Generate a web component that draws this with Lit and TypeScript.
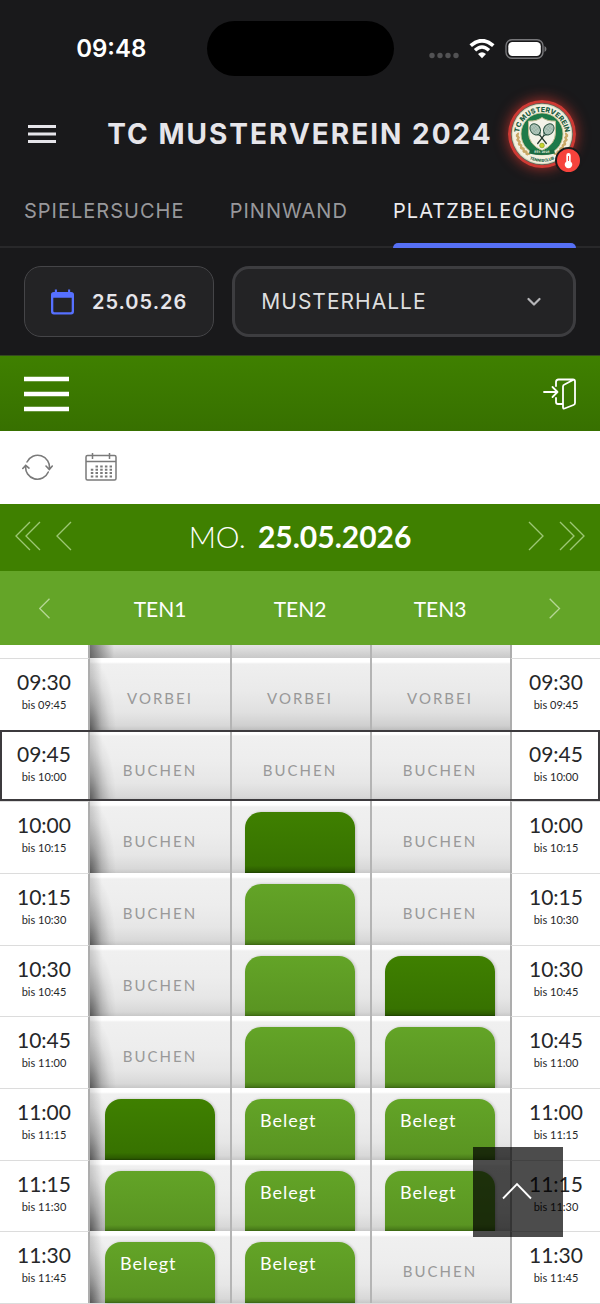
import { LitElement, html, css, svg, nothing } from "lit";
import { customElement, property, state } from "lit/decorators.js";
import { classMap } from "lit/directives/class-map.js";

type Slot = "past" | "free" | "start" | "taken" | "label";

interface Row {
    from: string;
    to: string;
    slots: Slot[];
    current?: boolean;
}

const COURTS = ["TEN1", "TEN2", "TEN3"];

const ROWS: Row[] = [
    { from: "09:30", to: "09:45", slots: ["past", "past", "past"] },
    { from: "09:45", to: "10:00", slots: ["free", "free", "free"], current: true },
    { from: "10:00", to: "10:15", slots: ["free", "start", "free"] },
    { from: "10:15", to: "10:30", slots: ["free", "taken", "free"] },
    { from: "10:30", to: "10:45", slots: ["free", "taken", "start"] },
    { from: "10:45", to: "11:00", slots: ["free", "taken", "taken"] },
    { from: "11:00", to: "11:15", slots: ["start", "label", "label"] },
    { from: "11:15", to: "11:30", slots: ["taken", "label", "label"] },
    { from: "11:30", to: "11:45", slots: ["label", "label", "free"] },
];

const TABS = ["SPIELERSUCHE", "PINNWAND", "PLATZBELEGUNG"];

// ========== Club logo ============= //
@customElement("club-logo")
export class ClubLogo extends LitElement {
    // one side of the laurel, mirrored for the other
    leaves() {
        const angles = [176, 166, 156, 146, 136, 127];
        return angles.map((a) => {
            const r = (a * Math.PI) / 180;
            const x = 34 + 25 * Math.cos(r);
            const y = 34 + 25 * Math.sin(r);
            return svg`
                <ellipse cx=${x - 1} cy=${y} rx="2.6" ry="1.2" transform="rotate(${a - 60} ${x} ${y})"></ellipse>
                <ellipse cx=${x + 1} cy=${y} rx="2.6" ry="1.2" transform="rotate(${a - 130} ${x} ${y})"></ellipse>
            `;
        });
    }

    racket(angle: number) {
        return svg`
            <g transform="rotate(${angle} 34 38)">
                <ellipse cx="34" cy="27" rx="4.8" ry="6" fill="#b4c8bd" stroke="#2c5443" stroke-width="1"></ellipse>
                <path d="M32 22v10M34 21v12M36 22v10M30 25h8M30 28h8" stroke="#7fa392" stroke-width=".4"></path>
                <path d="M32 32l2 3 2-3" fill="none" stroke="#2c5443" stroke-width=".8"></path>
                <path d="M34 35v10" stroke="#24382f" stroke-width="1.3" stroke-linecap="round"></path>
            </g>
        `;
    }

    render() {
        return html`
            <svg viewBox="0 0 68 68" role="img" aria-label="TC Musterverein Tennisclub">
                <defs>
                    <path id="upper" d="M11.200 38A23 23 0 1 1 56.800 38"></path>
                    <path id="lower" d="M13 52.300A27.800 27.800 0 0 0 55 52.300"></path>
                    <path id="banner" d="M25 52.500Q34 53.500 43 52.500"></path>
                </defs>
                <circle cx="34" cy="34" r="34" fill="#cf3a34"></circle>
                <circle cx="34" cy="34" r="31" fill="#54675a"></circle>
                <circle cx="34" cy="34" r="30.300" fill="#d9d8be"></circle>
                <circle cx="34" cy="34" r="29.200" fill="#f3f0e0"></circle>
                <circle cx="34" cy="34" r="21" fill="#1d7a49" stroke="#cfc391" stroke-width=".8"></circle>
                <g fill="#c9a766">${this.leaves()}</g>
                <g fill="#c9a766" transform="translate(68 0) scale(-1 1)">${this.leaves()}</g>
                <path d="M34 17.500q5.500 4 13.500 3.500v11.500q0 12-13.500 18q-13.500-6-13.500-18v-11.500q8 .5 13.500-3.500z"
                    fill="#f4f3e8" stroke="#bdb98e" stroke-width="1"></path>
                ${this.racket(-38)} ${this.racket(38)}
                <circle cx="34" cy="45.500" r="2.400" fill="#c6d52b" stroke="#6f8124" stroke-width=".5"></circle>
                <path d="M22 49.500q12 2 24 0l1 4q-13 3-26 0z" fill="#1b6a42"></path>
                <text class="name"><textPath href="#upper" startOffset="50%">TC MUSTERVEREIN</textPath></text>
                <text class="small"><textPath href="#lower" startOffset="50%">TENNISCLUB</textPath></text>
                <text class="est"><textPath href="#banner" startOffset="50%">EST. 2024</textPath></text>
            </svg>
            <span class="badge">
                <svg viewBox="0 0 23 23" aria-hidden="true">
                    <path d="M9.300 6.200a2.200 2.200 0 0 1 4.400 0v6.200a3.800 3.800 0 1 1-4.400 0z" fill="#fff"></path>
                    <path d="M11.500 7v5" stroke="#f6433c" stroke-width="1"></path>
                </svg>
            </span>
        `;
    }

    static styles = css`
        :host {
            display: block;
            position: relative;
            width: 68px;
            height: 68px;
            border-radius: 50%;
            box-shadow: 0 0 14px rgba(240, 60, 50, 0.7);
        }

        svg {
            display: block;
            width: 100%;
            height: 100%;
        }

        text {
            font-family: Inter, "Liberation Sans", sans-serif;
            font-weight: 800;
            text-anchor: middle;
            fill: #1c5c40;
        }

        .name {
            font-size: 7px;
        }

        .small {
            font-size: 4px;
        }

        .est {
            font-size: 3px;
            fill: #dfe8d2;
        }

        .badge {
            position: absolute;
            right: -6px;
            bottom: -6px;
            width: 23px;
            height: 23px;
            border: 2px solid #19191b;
            border-radius: 50%;
            background: #f6433c;
        }
    `;
}

// ========== Phone status bar ============= //
@customElement("status-bar")
export class StatusBar extends LitElement {
    render() {
        return html`
            <span class="clock">09:48</span>
            <span class="island"></span>
            <span class="signals">
                <svg width="30" height="20" viewBox="0 0 30 20" fill="#525254" aria-hidden="true">
                    <circle cx="3" cy="16.500" r="2.700"></circle>
                    <circle cx="11" cy="16.500" r="2.700"></circle>
                    <circle cx="19" cy="16.500" r="2.700"></circle>
                    <circle cx="27" cy="16.500" r="2.700"></circle>
                </svg>
                <svg width="26" height="20" viewBox="0 0 26 20" aria-hidden="true">
                    <path d="M1.700 6.700Q13-3.300 24.300 6.700" fill="none" stroke="#fff" stroke-width="3.700"></path>
                    <path d="M6 11.300Q13 4.800 20 11.300" fill="none" stroke="#fff" stroke-width="3.400"></path>
                    <path d="M13 19.300l-4-4.300q4-3.400 8 0z" fill="#fff"></path>
                </svg>
                <svg width="42" height="20" viewBox="0 0 42 20" aria-hidden="true">
                    <rect x="1" y=".7" width="37" height="18.600" rx="6" fill="none" stroke="#77777a" stroke-width="1.400"></rect>
                    <rect x="3.300" y="3" width="32.500" height="14" rx="4.200" fill="#fff"></rect>
                    <path d="M39.500 7q2 .8 2 3t-2 3z" fill="#77777a"></path>
                </svg>
            </span>
        `;
    }

    static styles = css`
        :host {
            display: grid;
            grid-template-columns: 1fr auto 1fr;
            align-items: center;
            height: 97px;
            color: #fff;
            font: 600 24px/32px Inter, "Liberation Sans", sans-serif;
        }

        .clock {
            justify-self: center;
            padding-left: 16px;
        }

        .island {
            width: 187px;
            height: 55px;
            border-radius: 28px;
            background: #000;
        }

        .signals {
            display: flex;
            align-items: center;
            justify-content: flex-end;
            gap: 10px;
            padding-right: 53px;
        }
    `;
}

// ========== One bookable cell ============= //
@customElement("court-slot")
export class CourtSlot extends LitElement {
    @property() kind: Slot = "free";

    render() {
        if (this.kind === "past") {
            return html`<span class="text">VORBEI</span>`;
        }
        if (this.kind === "free") {
            return html`<button class="text">BUCHEN</button>`;
        }
        const label = this.kind === "label" ? "Belegt" : nothing;
        return html`<div class="booking ${this.kind}">${label}</div>`;
    }

    static styles = css`
        :host {
            display: grid;
            font-family: Lato, "Liberation Sans", sans-serif;
        }

        .text {
            display: grid;
            place-items: center;
            padding: 8px 0 0;
            border: 0;
            background: none;
            color: #999;
            font: 400 15px/20px Lato, "Liberation Sans", sans-serif;
            letter-spacing: 2px;
            cursor: pointer;
        }

        span.text {
            cursor: default;
        }

        .booking {
            margin: 11px 15px 0;
            padding: 8px 15px 0;
            border-radius: 16px 16px 0 0;
            background: linear-gradient(#63a427, #5a9522 90%, #4a7d1a 97%, #3a6411);
            box-shadow: 1px 0 3px rgba(0, 0, 0, 0.2);
            color: #fff;
            font-size: 18px;
            line-height: 26px;
            letter-spacing: 1px;
        }

        .start {
            background: linear-gradient(#3f8000, #377200 88%, #2c5b00 97%, #1d4000);
        }
    `;
}

// ========== Page ============= //
@customElement("app-root")
export class AppRoot extends LitElement {
    @state() tab = "PLATZBELEGUNG";

    // ------ Thin arrow, single or double -----//
    arrow(dir: "left" | "right", size: number, double = false) {
        const one = dir === "left" ? "M15 1L1 15l14 14" : "M1 1l14 14L1 29";
        return html`
            <svg
                width=${double ? (size * 26) / 30 : (size * 16) / 30}
                height=${size}
                viewBox="0 0 ${double ? 26 : 16} 30"
                fill="none"
                stroke="currentColor"
                stroke-width=${40 / size}
                aria-hidden="true"
            >
                <path d=${one}></path>
                ${double ? svg`<path d=${one} transform="translate(10 0)"></path>` : nothing}
            </svg>
        `;
    }

    time(row: Row) {
        return html`<span class="from">${row.from}</span><span class="to">bis ${row.to}</span>`;
    }

    renderHeader() {
        return html`
            <header class="app-header">
                <status-bar></status-bar>
                <div class="title-bar">
                    <button class="menu" aria-label="Menü">
                        <svg width="28" height="20" viewBox="0 0 28 20" stroke="#e6e5ea" stroke-width="3" aria-hidden="true">
                            <path d="M0 2.500h28M0 10h28M0 17.500h28"></path>
                        </svg>
                    </button>
                    <h1>TC MUSTERVEREIN 2024</h1>
                    <club-logo></club-logo>
                </div>
                <nav class="tabs">
                    ${TABS.map(
                        (name) => html`
                            <button
                                class=${classMap({ tab: true, active: this.tab === name })}
                                @click=${() => (this.tab = name)}
                            >
                                <span>${name}</span>
                            </button>
                        `
                    )}
                </nav>
                <div class="filters">
                    <button class="date">
                        <svg width="23" height="26" viewBox="0 0 24 26" aria-hidden="true">
                            <path
                                d="M4 0h2.200v2.500h11.600V0H20v2.500h1a3 3 0 0 1 3 3V23a3 3 0 0 1-3 3H3a3 3 0 0 1-3-3V5.500a3 3 0 0 1 3-3h1zM2.400 8.500V22.500a1.300 1.300 0 0 0 1.300 1.300h16.600a1.300 1.300 0 0 0 1.300-1.300V8.500z"
                                fill="#5670ff"
                                fill-rule="evenodd"
                            ></path>
                        </svg>
                        25.05.26
                    </button>
                    <div class="place">
                        <select aria-label="Anlage">
                            <option>MUSTERHALLE</option>
                        </select>
                        <svg width="14" height="10" viewBox="0 0 14 10" aria-hidden="true">
                            <path d="M1.500 2L7 7.500 12.500 2" fill="none" stroke="#b5b5b8" stroke-width="2.200" stroke-linecap="round" stroke-linejoin="round"></path>
                        </svg>
                    </div>
                </div>
            </header>
        `;
    }

    renderBars() {
        return html`
            <div class="green-bar">
                <button aria-label="Navigation">
                    <svg width="45" height="36" viewBox="0 0 45 36" stroke="#fff" stroke-width="4.600" aria-hidden="true">
                        <path d="M0 3h45M0 18h45M0 33h45"></path>
                    </svg>
                </button>
                <button aria-label="Anmelden">
                    <svg width="33" height="32" viewBox="0 0 33 32" fill="none" stroke="#fff" stroke-width="1.800" stroke-linejoin="round" stroke-linecap="round" aria-hidden="true">
                        <path d="M13 8V4q0-2.500 2.500-2.500H30q2 0 2 2V25q0 1.500-1.500 2l-9 3.500q-1.500.5-1.500-1.200V8.500q0-1.500 1.500-2L30.500 1.800M13 20v4q0 2 2 2h4.500M1 14h13.500M9.500 9l5 5-5 5"></path>
                    </svg>
                </button>
            </div>
            <div class="tools">
                <button aria-label="Aktualisieren">
                    <svg width="31" height="28" viewBox="0 0 31 28" fill="none" stroke="#7a7a7a" stroke-width="1.600" stroke-linecap="round" aria-hidden="true">
                        <path d="M5 9A11.800 11.800 0 0 1 27.300 16M24 13l3.300 3.500L30.300 13M26.300 19A11.800 11.800 0 0 1 3.700 13M.8 15.500L3.700 12.300l3.300 2.800"></path>
                    </svg>
                </button>
                <button aria-label="Kalender">
                    <svg width="32" height="28" viewBox="0 0 32 28" fill="none" stroke="#7a7a7a" stroke-width="1.500" aria-hidden="true">
                        <rect x="1" y="2.500" width="30" height="24.500" rx="1.500"></rect>
                        <path d="M1 8.500h30M7.500 0v6M24.500 0v6"></path>
                        <path d="M10.500 13.500h16.500M5.800 16.800h21.200M5.800 20.100h21.200M5.800 23.400h21.200" stroke-width="2" stroke-dasharray="2.500 2.200"></path>
                    </svg>
                </button>
            </div>
            <div class="day-bar">
                <div class="arrows">
                    <button aria-label="Woche zurück">${this.arrow("left", 30, true)}</button>
                    <button aria-label="Tag zurück">${this.arrow("left", 30)}</button>
                </div>
                <h2>MO. <b>25.05.2026</b></h2>
                <div class="arrows">
                    <button aria-label="Tag vor">${this.arrow("right", 30)}</button>
                    <button aria-label="Woche vor">${this.arrow("right", 30, true)}</button>
                </div>
            </div>
        `;
    }

    renderPlan() {
        return html`
            <table>
                <thead>
                    <tr>
                        <td><button aria-label="Vorherige Plätze">${this.arrow("left", 21)}</button></td>
                        ${COURTS.map((c) => html`<th scope="col">${c}</th>`)}
                        <td><button aria-label="Nächste Plätze">${this.arrow("right", 21)}</button></td>
                    </tr>
                </thead>
                <tbody>
                    <tr class="cut" aria-hidden="true">
                        <td class="time"></td>
                        <td class="slot"></td>
                        <td class="slot"></td>
                        <td class="slot"></td>
                        <td class="time"></td>
                    </tr>
                    ${ROWS.map(
                        (row) => html`
                            <tr class=${classMap({ current: !!row.current })}>
                                <th class="time" scope="row">${this.time(row)}</th>
                                ${row.slots.map(
                                    (s) => html`<td class=${classMap({ slot: true, past: s === "past" })}><court-slot .kind=${s}></court-slot></td>`
                                )}
                                <td class="time">${this.time(row)}</td>
                            </tr>
                        `
                    )}
                </tbody>
            </table>
        `;
    }

    render() {
        return html`
            ${this.renderHeader()} ${this.renderBars()} ${this.renderPlan()}
            <button class="to-top" aria-label="Nach oben" @click=${() => window.scrollTo(0, 0)}>
                <svg width="30" height="18" viewBox="0 0 30 18" fill="none" stroke="#fff" stroke-width="1.800" aria-hidden="true">
                    <path d="M1 16.500L15 2l14 14.500"></path>
                </svg>
            </button>
        `;
    }

    static styles = css`
        :host {
            display: flex;
            flex-direction: column;
            min-height: 100vh;
            background: #fff;
            font-family: Lato, "Liberation Sans", sans-serif;
        }

        * {
            box-sizing: border-box;
        }

        button {
            margin: 0;
            padding: 0;
            border: 0;
            background: none;
            color: inherit;
            font: inherit;
            cursor: pointer;
        }

        svg {
            display: block;
        }

        h1,
        h2 {
            margin: 0;
        }

        /* ---- dark header ---- */
        .app-header {
            background: #19191b;
            color: #e6e5ea;
            font-family: Inter, "Liberation Sans", sans-serif;
        }

        .title-bar {
            display: grid;
            grid-template-columns: 1fr auto 1fr;
            align-items: center;
            height: 74px;
            padding: 0 24px;
        }

        .menu {
            justify-self: start;
            padding: 4px;
        }

        h1 {
            font-size: 28px;
            line-height: 36px;
            font-weight: 700;
            letter-spacing: 2px;
            white-space: nowrap;
        }

        club-logo {
            justify-self: end;
        }

        .tabs {
            display: flex;
            justify-content: space-between;
            height: 77px;
            padding: 0 24px;
            box-shadow: inset 0 -2px #28282a;
        }

        .tab {
            display: grid;
            grid-template-rows: 1fr 5px;
            align-items: center;
            padding-top: 8px;
            color: #98989b;
            font-size: 20px;
            letter-spacing: 1px;
        }

        .tab.active {
            color: #ececef;
        }

        .tab.active::after {
            content: "";
            height: 5px;
            border-radius: 5px 5px 0 0;
            background: #5670f5;
        }

        .filters {
            display: flex;
            gap: 18px;
            padding: 18px 24px;
        }

        .date {
            display: flex;
            align-items: center;
            gap: 18px;
            height: 71px;
            padding: 0 26px;
            border: 1px solid #454548;
            border-radius: 17px;
            background: #232325;
            font-size: 20px;
            font-weight: 600;
            letter-spacing: 1px;
        }

        .place {
            display: flex;
            flex: 1;
            align-items: center;
            padding-right: 32px;
            border: 3px solid #3d3d40;
            border-radius: 17px;
            background: #232325;
        }

        select {
            flex: 1;
            align-self: stretch;
            padding: 0 0 0 26px;
            border: 0;
            appearance: none;
            background: none;
            color: #dededf;
            font: 400 21px/28px Inter, "Liberation Sans", sans-serif;
            letter-spacing: 1px;
        }

        /* ---- booking site bars ---- */
        .green-bar {
            display: flex;
            align-items: center;
            justify-content: space-between;
            height: 76px;
            padding: 0 24px;
            border-top: 1px solid #34491f;
            background: linear-gradient(#3f8000, #377000);
        }

        .tools {
            display: flex;
            align-items: center;
            gap: 32px;
            height: 73px;
            padding: 0 22px 2px;
        }

        .day-bar {
            display: flex;
            align-items: center;
            justify-content: space-between;
            height: 67px;
            padding: 0 15px 4px;
            background: #3f8000;
            color: #fff;
        }

        .arrows {
            display: flex;
            gap: 15px;
            color: #9dc774;
        }

        h2 {
            font-size: 30px;
            line-height: 36px;
            font-weight: 300;
        }

        b {
            padding-left: 4px;
            font-weight: 700;
        }

        /* ---- plan ---- */
        table {
            display: flex;
            flex: 1;
            flex-direction: column;
        }

        tbody {
            display: flex;
            flex: 1;
            flex-direction: column;
            border-bottom: 1px solid #dcdcdc;
        }

        tr {
            display: grid;
            grid-template-columns: 90px 1fr 1fr 1fr 90px;
        }

        td,
        th {
            padding: 0;
            font-weight: 400;
        }

        thead tr {
            align-items: center;
            justify-items: center;
            height: 74px;
            background: #64a528;
            color: #fff;
            font-size: 21px;
        }

        thead button {
            display: block;
            color: #b5d795;
        }

        tbody tr {
            flex: 1 0 64px;
        }

        tbody .cut {
            flex: 0 0 13px;
        }

        .time {
            display: flex;
            flex-direction: column;
            align-items: center;
            padding-top: 9px;
            border-top: 1px solid #dcdcdc;
            color: #262729;
        }

        .time:first-child {
            border-right: 2px solid #adadad;
        }

        .time:last-child {
            border-left: 2px solid #adadad;
        }

        .cut .time {
            border-top: 0;
        }

        .from {
            font-size: 21px;
            line-height: 27px;
        }

        .to {
            font-size: 11px;
            line-height: 20px;
        }

        .slot {
            display: grid;
            background: linear-gradient(#fff 4px, #f0f0f0 6px, #ededed 45%, #e6e6e6 75%, #d8d8d8 94%, #c8c8c8);
        }

        .past {
            background: linear-gradient(#fff 4px, #efefef 6px, #eaeaea 45%, #e0e0e0 75%, #cfcfcf 94%, #bdbdbd);
        }

        .slot + .slot {
            box-shadow: inset 2px 0 #b4b4b4;
        }

        .time + .slot {
            background:
                radial-gradient(ellipse 26px 100% at 0 100%, rgba(0, 0, 0, 0.5), rgba(0, 0, 0, 0.22) 40%, rgba(0, 0, 0, 0.06) 75%, transparent),
                linear-gradient(90deg, rgba(0, 0, 0, 0.14), transparent 12px),
                linear-gradient(#fff 4px, #f0f0f0 6px, #ededed 45%, #e6e6e6 75%, #d8d8d8 94%, #c8c8c8);
        }

        .cut .slot {
            background: linear-gradient(#e4e4e4, #c8c8c8);
        }

        .cut .time + .slot {
            background:
                linear-gradient(90deg, rgba(0, 0, 0, 0.5), transparent 24px),
                linear-gradient(#e4e4e4, #c8c8c8);
        }

        .current {
            outline: 2px solid #3c3a3d;
            outline-offset: -2px;
        }

        .to-top {
            position: fixed;
            right: 37px;
            bottom: 67px;
            display: grid;
            place-items: center;
            width: 90px;
            height: 90px;
            padding: 0 3px 3px 0;
            background: rgba(0, 0, 0, 0.7);
        }
    `;
}
